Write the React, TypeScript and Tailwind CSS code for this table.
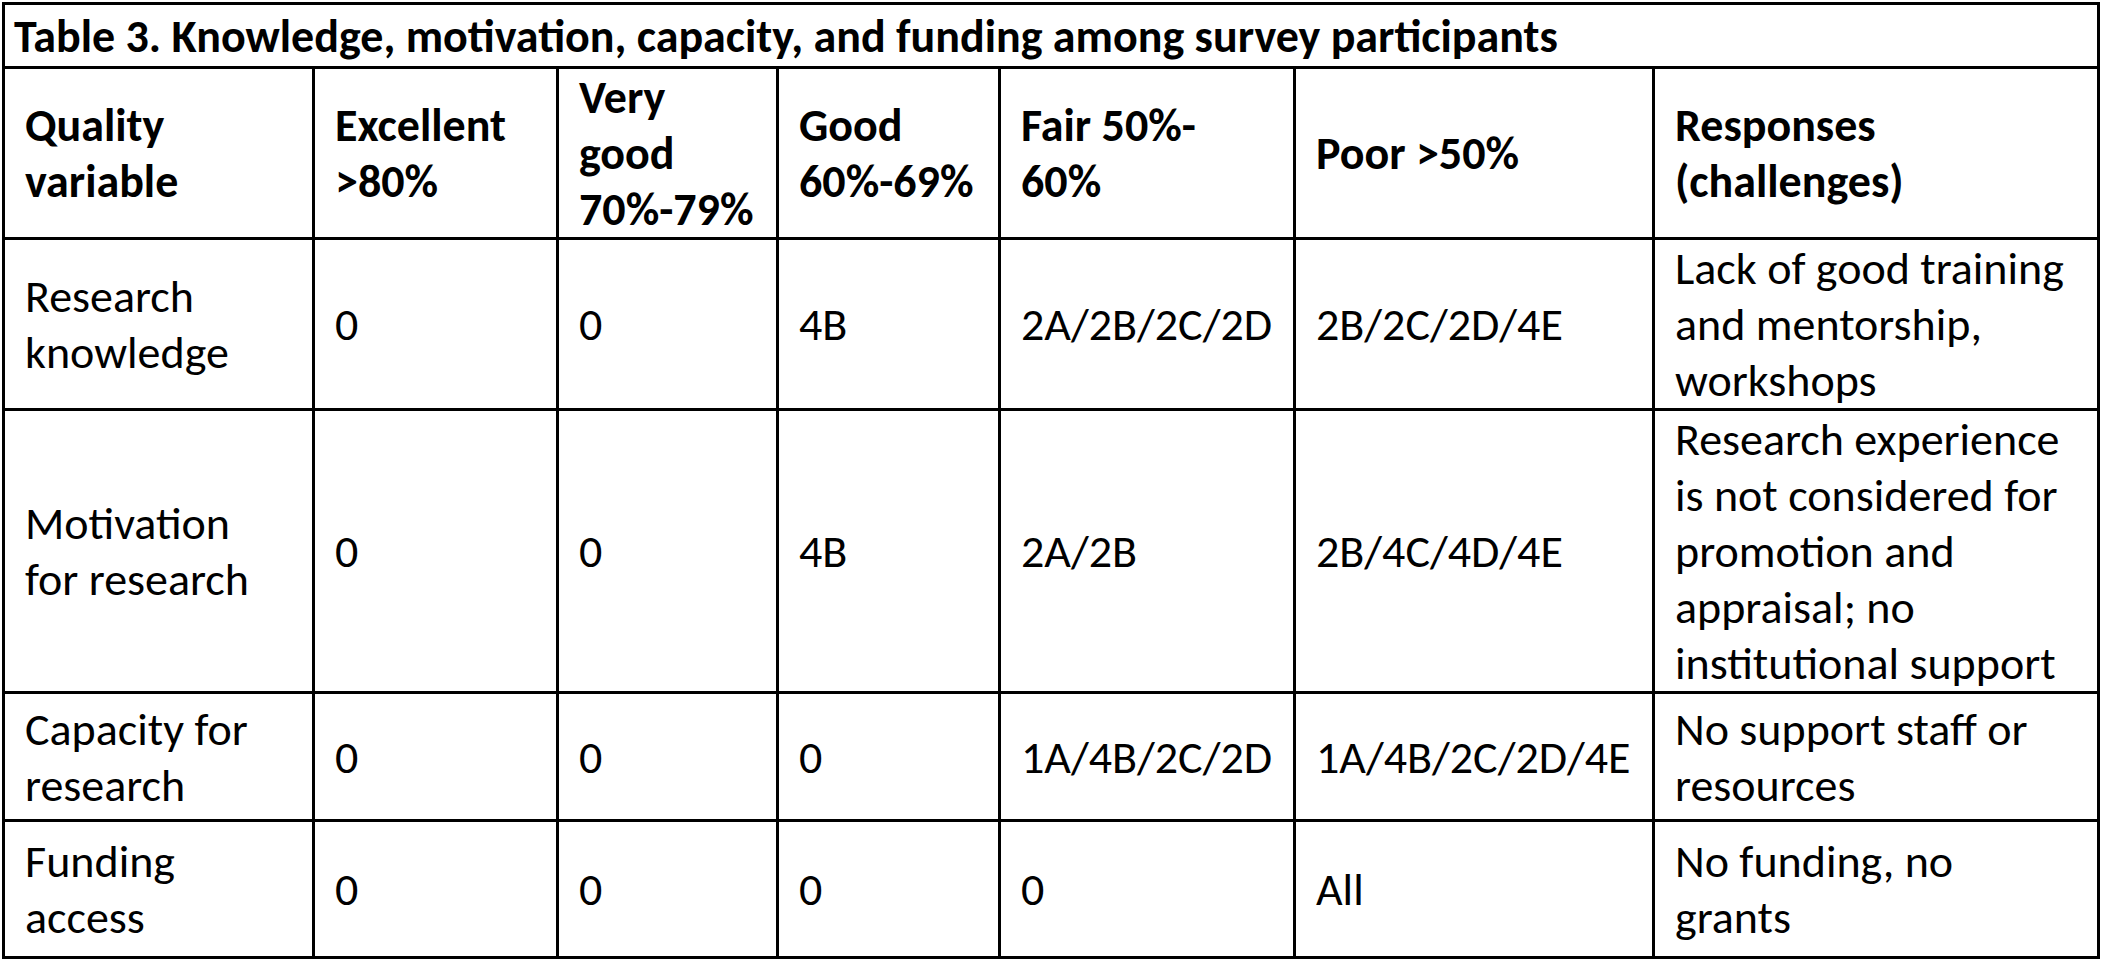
import React from 'react';

interface Row {
  label: string[];
  values: string[];
  responses: string[];
  height: string;
}

const headers: string[][] = [
  ['Quality', 'variable'],
  ['Excellent', '>80%'],
  ['Very', 'good', '70%-79%'],
  ['Good', '60%-69%'],
  ['Fair 50%-', '60%'],
  ['Poor >50%'],
  ['Responses', '(challenges)'],
];

const rows: Row[] = [
  {
    label: ['Research', 'knowledge'],
    values: ['0', '0', '4B', '2A/2B/2C/2D', '2B/2C/2D/4E'],
    responses: ['Lack of good training', 'and mentorship,', 'workshops'],
    height: 'h-[170px]',
  },
  {
    label: ['Motivation', 'for research'],
    values: ['0', '0', '4B', '2A/2B', '2B/4C/4D/4E'],
    responses: [
      'Research experience',
      'is not considered for',
      'promotion and',
      'appraisal; no',
      'institutional support',
    ],
    height: 'h-[282px]',
  },
  {
    label: ['Capacity for', 'research'],
    values: ['0', '0', '0', '1A/4B/2C/2D', '1A/4B/2C/2D/4E'],
    responses: ['No support staff or', 'resources'],
    height: 'h-[128px]',
  },
  {
    label: ['Funding', 'access'],
    values: ['0', '0', '0', '0', 'All'],
    responses: ['No funding, no', 'grants'],
    height: 'h-[137px]',
  },
];

// column widths measured between grid lines
const colWidths = ['w-[310px]', 'w-[244px]', 'w-[220px]', 'w-[222px]', 'w-[295px]', 'w-[359px]', 'w-[445px]'];

const Lines: React.FC<{ lines: string[] }> = ({ lines }) => (
  <>
    {lines.map((line, i) => (
      <div key={i} className="whitespace-nowrap">
        {line}
      </div>
    ))}
  </>
);

const cellClass = 'border-[3px] border-black pl-[20px] pr-[6px] py-0 align-middle text-left';

const App: React.FC = () => {
  return (
    <div className="min-h-screen bg-white pl-[2px] pt-[2px]">
      <table
        className="table-fixed border-collapse w-[2098px] text-black text-[46px] leading-[56px]"
        style={{ fontFamily: 'Carlito, Lato, "Liberation Sans", sans-serif' }}
      >
        <colgroup>
          {colWidths.map((w, i) => (
            <col key={i} className={w} />
          ))}
        </colgroup>
        <thead>
          {/* Caption row */}
          <tr className="h-[64px]">
            <th colSpan={7} className="border-[3px] border-black pl-[9px] py-0 align-middle text-left font-bold">
              Table 3. Knowledge, motivation, capacity, and funding among survey participants
            </th>
          </tr>
          <tr className="h-[170px]">
            {headers.map((h, i) => (
              <th key={i} className={`${cellClass} font-bold`}>
                <Lines lines={h} />
              </th>
            ))}
          </tr>
        </thead>
        <tbody>
          {rows.map((row, i) => (
            <tr key={i} className={row.height}>
              <td className={cellClass}>
                <Lines lines={row.label} />
              </td>
              {row.values.map((v, j) => (
                <td key={j} className={`${cellClass} whitespace-nowrap`}>
                  {v}
                </td>
              ))}
              <td className={cellClass}>
                <Lines lines={row.responses} />
              </td>
            </tr>
          ))}
        </tbody>
      </table>
    </div>
  );
};

export default App;
